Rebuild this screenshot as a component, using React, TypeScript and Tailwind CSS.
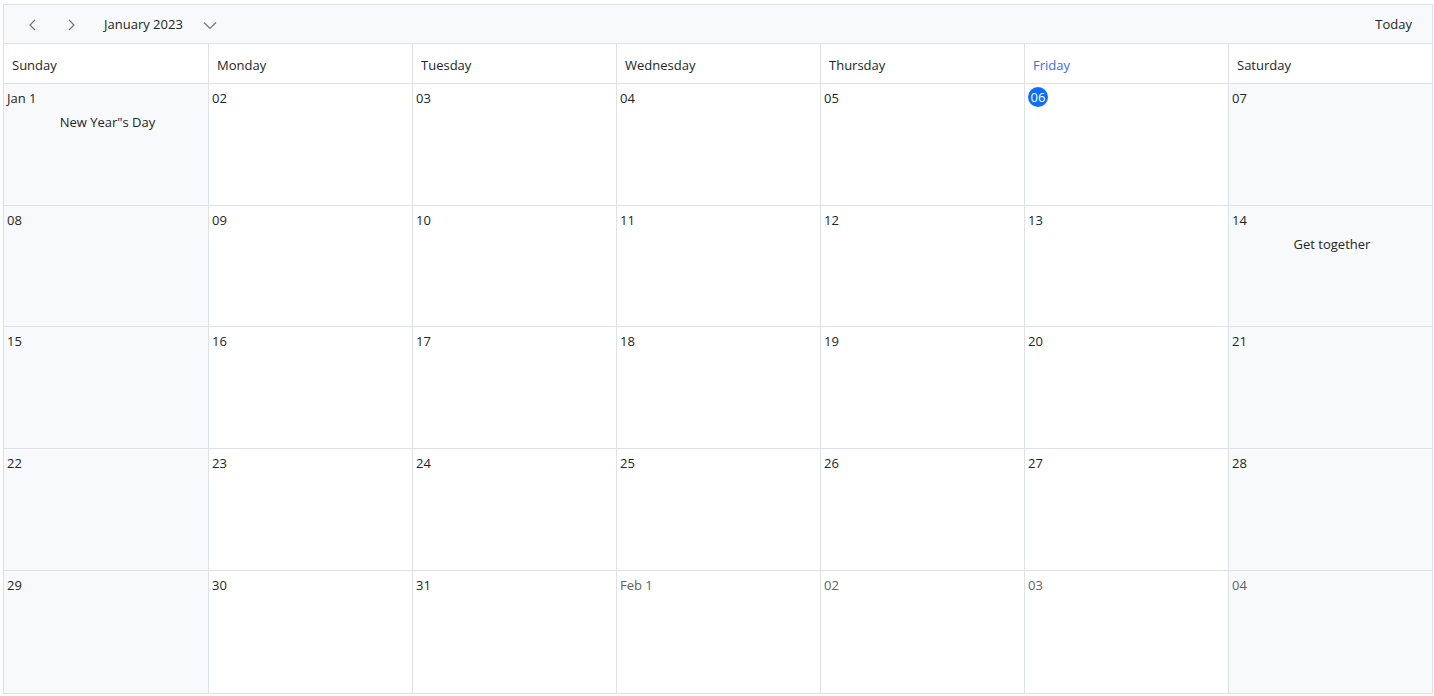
import React from "react";

type Cell = { label: string; muted?: boolean; today?: boolean; event?: string };

const days = ["Sunday", "Monday", "Tuesday", "Wednesday", "Thursday", "Friday", "Saturday"];

function buildWeeks(): Cell[][] {
  const cells: Cell[] = [];
  for (let d = 1; d <= 31; d++) {
    cells.push({
      label: d === 1 ? "Jan 1" : String(d).padStart(2, "0"),
      today: d === 6,
      event: d === 1 ? 'New Year"s Day' : d === 14 ? "Get together" : undefined,
    });
  }
  for (let d = 1; d <= 4; d++) {
    cells.push({ label: d === 1 ? "Feb 1" : String(d).padStart(2, "0"), muted: true });
  }
  const weeks: Cell[][] = [];
  for (let i = 0; i < cells.length; i += 7) weeks.push(cells.slice(i, i + 7));
  return weeks;
}

function Chevron({ dir }: { dir: "left" | "right" | "down" }) {
  const d =
    dir === "left" ? "M10 3 L5 8 L10 13" : dir === "right" ? "M6 3 L11 8 L6 13" : "M2 5.5 L8 11.5 L14 5.5";
  return (
    <svg width="16" height="16" viewBox="0 0 16 16" fill="none" stroke="#6c757d" strokeWidth="1.2">
      <path d={d} />
    </svg>
  );
}

export default function App() {
  const weeks = buildWeeks();
  return (
    <div
      className="pl-[3px] pt-[4px] bg-white text-[#212529]"
      style={{ fontFamily: '"Segoe UI", "Open Sans", "Noto Sans", sans-serif' }}
    >
      <div className="w-[1430px] h-[690px] border border-[#dee2e6] flex flex-col">
        <div className="h-[39px] shrink-0 flex items-center pt-[2px] bg-[#f8f9fa] border-b border-[#dee2e6] pl-[17px] pr-[20px] text-[13px]">
          <button className="w-[24px] h-[24px] flex items-center justify-center">
            <Chevron dir="left" />
          </button>
          <button className="w-[24px] h-[24px] ml-[14px] flex items-center justify-center">
            <Chevron dir="right" />
          </button>
          <div className="ml-[21px] flex items-center gap-[19px]">
            <span>January 2023</span>
            <Chevron dir="down" />
          </div>
          <span className="ml-auto">Today</span>
        </div>
        <div className="h-[40px] shrink-0 grid grid-cols-7 border-b border-[#dee2e6] text-[13px]">
          {days.map((d, i) => (
            <div
              key={d}
              className={`flex items-center pt-[5px] pl-[8px] ${i > 0 ? "border-l border-[#dee2e6]" : ""} ${
                i === 5 ? "text-[#4268f0]" : ""
              }`}
            >
              {d}
            </div>
          ))}
        </div>
        <div className="flex-1 grid grid-rows-[121px_121px_122px_122px_1fr]">
          {weeks.map((week, wi) => (
            <div key={wi} className={`grid grid-cols-7 ${wi > 0 ? "border-t border-[#dee2e6]" : ""}`}>
              {week.map((c, ci) => (
                <div
                  key={ci}
                  className={`flex flex-col pt-[5px] pl-[3px] text-[13px] ${
                    ci > 0 ? "border-l border-[#dee2e6]" : ""
                  } ${ci === 0 || ci === 6 ? "bg-[#f8f9fa]" : "bg-white"}`}
                >
                  {c.today ? (
                    <span className="w-[20px] h-[20px] -mt-[2px] mb-[-2px] rounded-full bg-[#0d6efd] text-white flex items-center justify-center leading-none">
                      {c.label}
                    </span>
                  ) : (
                    <span className={`leading-[18px] ${c.muted ? "text-[#5c636a]" : ""}`}>{c.label}</span>
                  )}
                  {c.event && <div className="mt-[6px] text-center leading-[18px]">{c.event}</div>}
                </div>
              ))}
            </div>
          ))}
        </div>
      </div>
    </div>
  );
}
